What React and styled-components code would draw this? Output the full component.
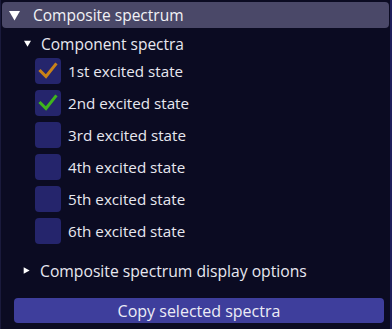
import React, { useState } from 'react';
import styled, { createGlobalStyle } from 'styled-components';

const GlobalStyle = createGlobalStyle`
  html, body {
    margin: 0;
    padding: 0;
    background: #0b0b22;
  }
  body {
    font-family: "Open Sans", "DejaVu Sans", sans-serif;
    color: #e8e8f0;
  }
`;

const spectra = [
  { label: '1st excited state', checked: true, color: '#c98218' },
  { label: '2nd excited state', checked: true, color: '#3fb51c' },
  { label: '3rd excited state', checked: false },
  { label: '4th excited state', checked: false },
  { label: '5th excited state', checked: false },
  { label: '6th excited state', checked: false },
];

const App = () => {
  const [items, setItems] = useState(spectra);

  const toggle = (idx) => {
    setItems(items.map((it, i) => (i === idx ? { ...it, checked: !it.checked } : it)));
  };

  return (
    <>
      <GlobalStyle />
      <Panel>
        <Header>
          <Triangle size={11} />
          <span>Composite spectrum</span>
        </Header>
        <TreeNode>
          <Triangle size={7} />
          <span>Component spectra</span>
        </TreeNode>
        <CheckList>
          {items.map((item, i) => (
            <CheckRow key={item.label} onClick={() => toggle(i)}>
              <Box>
                {item.checked && (
                  <svg width="26" height="26" viewBox="0 0 26 26">
                    <polyline
                      points="5.5,13 11,18.5 20.5,6.5"
                      fill="none"
                      stroke={item.color}
                      strokeWidth="3"
                      strokeLinecap="square"
                    />
                  </svg>
                )}
              </Box>
              <span>{item.label}</span>
            </CheckRow>
          ))}
        </CheckList>
        <TreeNode collapsed>
          <Triangle size={7} right />
          <span>Composite spectrum display options</span>
        </TreeNode>
        <CopyButton>Copy selected spectra</CopyButton>
      </Panel>
    </>
  );
};

const Triangle = ({ size, right }) => (
  <svg width={size} height={size} viewBox="0 0 10 10" style={{ flexShrink: 0 }}>
    {right ? (
      <polygon points="1,0.5 9.5,5 1,9.5" fill="#ffffff" />
    ) : (
      <polygon points="0,1 10,1 5,9.5" fill="#ffffff" />
    )}
  </svg>
);

const Panel = styled.div`
  width: 392px;
  height: 329px;
  box-sizing: border-box;
  border-left: 1px solid #1a1a3c;
  border-right: 2px solid #1f1f5c;
  padding: 2px 1px 0 1px;
  display: flex;
  flex-direction: column;
`;

const Header = styled.div`
  height: 26px;
  background: #4a4868;
  border-radius: 4px;
  display: flex;
  align-items: center;
  gap: 13px;
  padding-left: 7px;
  font-size: 15.5px;
  color: #f2f2f6;
`;

const TreeNode = styled.div`
  height: 25px;
  display: flex;
  align-items: center;
  gap: 10px;
  padding-left: ${(p) => (p.collapsed ? '21px' : '22px')};
  font-size: ${(p) => (p.collapsed ? '15.7px' : '15.5px')};
  margin-top: ${(p) => (p.collapsed ? '14px' : '3px')};
`;

const CheckList = styled.div`
  display: flex;
  flex-direction: column;
  gap: 6px;
  padding-left: 33px;
  margin-top: 2px;
`;

const CheckRow = styled.label`
  display: flex;
  align-items: center;
  gap: 7px;
  height: 26px;
  font-size: 15.2px;
  cursor: pointer;
`;

const Box = styled.div`
  width: 26px;
  height: 26px;
  border-radius: 4px;
  background: #25256c;
  display: flex;
`;

const CopyButton = styled.button`
  margin: 15px 5px 0 12px;
  height: 25px;
  border: none;
  border-radius: 4px;
  background: #3e3e9c;
  color: #ececf6;
  font-family: inherit;
  font-size: 16px;
  padding: 0;
  cursor: pointer;
`;

export default App;
